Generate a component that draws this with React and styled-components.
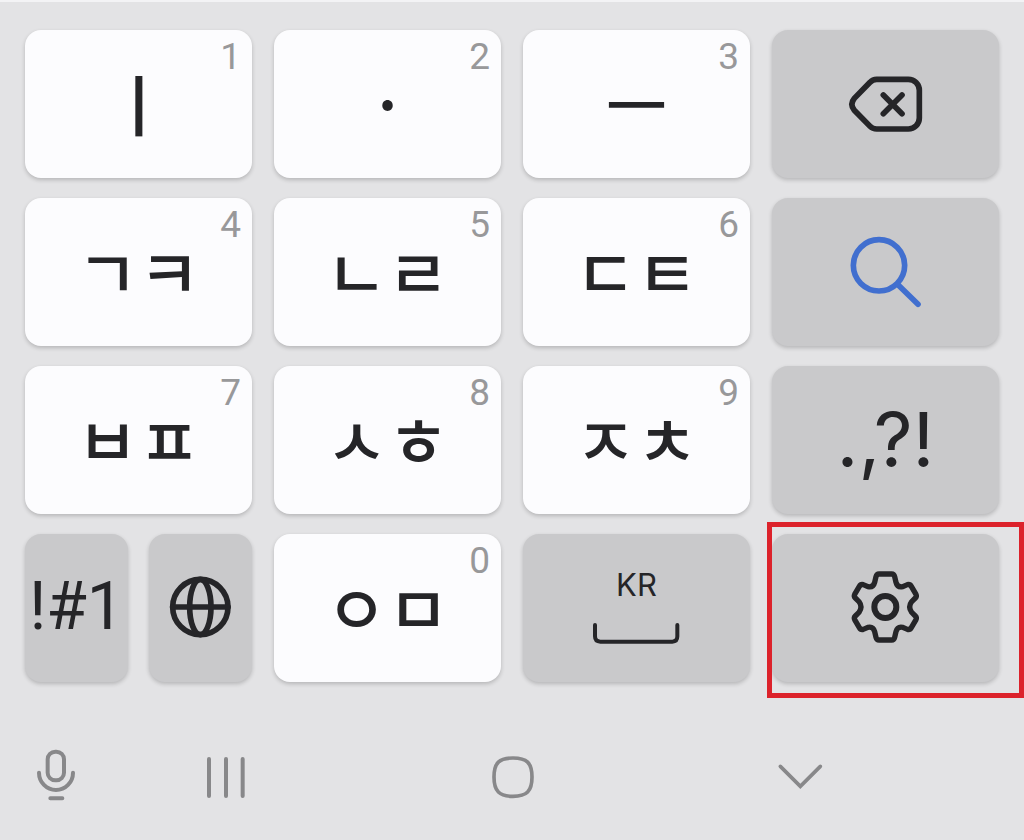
import styled, { createGlobalStyle } from "styled-components";

const GlobalStyle = createGlobalStyle`
  * {
    box-sizing: border-box;
  }

  body {
    margin: 0;
    background: #e3e3e5;
  }
`;

const Keyboard = styled.main`
  border-top: 2px solid #f3f3f5;
  padding-top: 28px;
  color: #252528;
  font-family: Inter, "Noto Sans CJK KR", sans-serif;
`;

const KeyGrid = styled.div`
  display: grid;
  grid-template-columns: repeat(4, 1fr);
  grid-auto-rows: 148px;
  gap: 20px 22px;
  padding: 0 25px;
`;

const Key = styled.button`
  position: relative;
  display: flex;
  flex: 1;
  flex-direction: column;
  align-items: center;
  justify-content: center;
  gap: 20px;
  width: 100%;
  min-width: 0;
  height: 100%;
  padding: 0 0 2px;
  border: 0;
  border-radius: 16px;
  background: ${(props) => (props.$dark ? "#c9c9cb" : "#fcfcfe")};
  box-shadow: 0 2px 4px rgba(0, 0, 0, 0.2);
  color: inherit;
  font-family: inherit;
  cursor: pointer;
`;

const Letters = styled.span`
  padding-bottom: 2px;
  font-family: "Noto Sans CJK KR", sans-serif;
  font-size: 67px;
  font-weight: 500;
  line-height: 96px;
  white-space: nowrap;
`;

const Digit = styled.span`
  position: absolute;
  top: 5px;
  right: 11px;
  color: #98989a;
  font-family: Roboto, sans-serif;
  font-size: 37px;
  line-height: 44px;
`;

const Symbols = styled.span`
  font-family: Roboto, sans-serif;
  font-size: 66px;
  line-height: 72px;
`;

const Punctuation = styled.span`
  font-size: 76px;
  line-height: 96px;
`;

const Language = styled.span`
  font-size: 31px;
  line-height: 32px;
`;

const KeyPair = styled.div`
  display: flex;
  gap: 21px;
`;

const Highlighted = styled.div`
  position: relative;

  &::after {
    content: "";
    position: absolute;
    inset: -12px -25px -16px -5px;
    border: 5px solid #dc222b;
    pointer-events: none;
  }
`;

const Icon = styled.svg`
  display: block;
  flex-shrink: 0;
  width: ${(props) => props.$width || 80}px;
  height: ${(props) => props.$height || 80}px;
  fill: none;
  stroke: currentColor;
  stroke-width: ${(props) => props.$stroke || 17};
  stroke-linecap: round;
`;

const SearchIcon = styled(Icon)`
  color: #416fcf;
`;

const NavBar = styled.nav`
  display: grid;
  grid-template-columns: 54px repeat(3, 1fr);
  margin-top: 65px;
  padding: 0 81px 0 29px;
`;

const NavButton = styled.button`
  display: flex;
  justify-content: center;
  padding: 0;
  border: 0;
  background: none;
  color: #88888a;
  cursor: pointer;
`;

const LetterKey = ({ digit, children }) => (
  <Key>
    <Letters>{children}</Letters>
    {digit && <Digit>{digit}</Digit>}
  </Key>
);

const App = () => {
  return (
    <>
      <GlobalStyle />
      <Keyboard lang="ko">
        <KeyGrid>
          <LetterKey digit="1">ㅣ</LetterKey>
          <LetterKey digit="2">·</LetterKey>
          <LetterKey digit="3">ㅡ</LetterKey>
          <Key $dark aria-label="Backspace">
            <Icon viewBox="258 130 240 240">
              <path d="M350 179H445A33 33 0 0 1 478 212V295A33 33 0 0 1 445 328H350Q338 328 330 320L283 272Q268 254 283 236L330 188Q338 179 350 179Z" />
              <path d="M370 226L426 282M426 226L370 282" />
            </Icon>
          </Key>

          <LetterKey digit="4">ㄱㅋ</LetterKey>
          <LetterKey digit="5">ㄴㄹ</LetterKey>
          <LetterKey digit="6">ㄷㅌ</LetterKey>
          <Key $dark aria-label="Search">
            <SearchIcon viewBox="258 123 240 240">
              <circle cx="357" cy="226" r="77" />
              <path d="M414 284L474 343" />
            </SearchIcon>
          </Key>

          <LetterKey digit="7">ㅂㅍ</LetterKey>
          <LetterKey digit="8">ㅅㅎ</LetterKey>
          <LetterKey digit="9">ㅈㅊ</LetterKey>
          <Key $dark>
            <Punctuation>.,?!</Punctuation>
          </Key>

          <KeyPair>
            <Key $dark>
              <Symbols>!#1</Symbols>
            </Key>
            <Key $dark aria-label="Change language">
              <Icon viewBox="453 140 240 240">
                <circle cx="571" cy="260" r="83" />
                <ellipse cx="571" cy="260" rx="32" ry="83" />
                <path d="M488 260H654" />
              </Icon>
            </Key>
          </KeyPair>
          <LetterKey digit="0">ㅇㅁ</LetterKey>
          <Key $dark aria-label="Space, KR">
            <Language>KR</Language>
            <Icon viewBox="246 304 270 72" $width={90} $height={24} $stroke={12}>
              <path d="M255 316V350Q255 366 271 366H487Q502 366 502 350V316" />
            </Icon>
          </Key>
          <Highlighted>
            <Key $dark aria-label="Settings">
              <Icon viewBox="-118 -120 240 240" $stroke={16}>
                <path d="M-19 -99H19Q26 -99 28 -91L32 -74Q36 -58 52 -61L66 -67Q74 -69 78 -62L92 -38Q95 -32 90 -27L79 -16Q67 0 79 16L90 27Q95 32 92 38L78 62Q74 69 66 67L52 61Q36 58 32 74L28 91Q26 99 19 99H-19Q-26 99 -28 91L-32 74Q-36 58 -52 61L-66 67Q-74 69 -78 62L-92 38Q-95 32 -90 27L-79 16Q-67 0 -79 -16L-90 -27Q-95 -32 -92 -38L-78 -62Q-74 -69 -66 -67L-52 -61Q-36 -58 -32 -74L-28 -91Q-26 -99 -19 -99Z" />
                <circle r="33" strokeWidth="18" />
              </Icon>
            </Key>
          </Highlighted>
        </KeyGrid>

        <NavBar>
          <NavButton aria-label="Voice input">
            <Icon viewBox="78 51 180 180" $width={60} $height={60} $stroke={12}>
              <rect x="143" y="65" width="49" height="86" rx="23" />
              <path d="M117 128A51 52 0 0 0 219 128M151 205H187" />
            </Icon>
          </NavButton>
          <NavButton aria-label="Recent apps">
            <Icon viewBox="590 51 180 180" $width={60} $height={60} $stroke={12}>
              <path d="M629 87V198M680 87V198M730 87V198" />
            </Icon>
          </NavButton>
          <NavButton aria-label="Home">
            <Icon viewBox="39 51 180 180" $width={60} $height={60} $stroke={11}>
              <path d="M129 84C170 84 186 98 186 141S170 199 129 199S72 184 72 141S88 84 129 84Z" />
            </Icon>
          </NavButton>
          <NavButton aria-label="Hide keyboard">
            <Icon viewBox="900 51 180 180" $width={60} $height={60} $stroke={11}>
              <path d="M931 109L991 169L1051 109" />
            </Icon>
          </NavButton>
        </NavBar>
      </Keyboard>
    </>
  );
};

export default App;
